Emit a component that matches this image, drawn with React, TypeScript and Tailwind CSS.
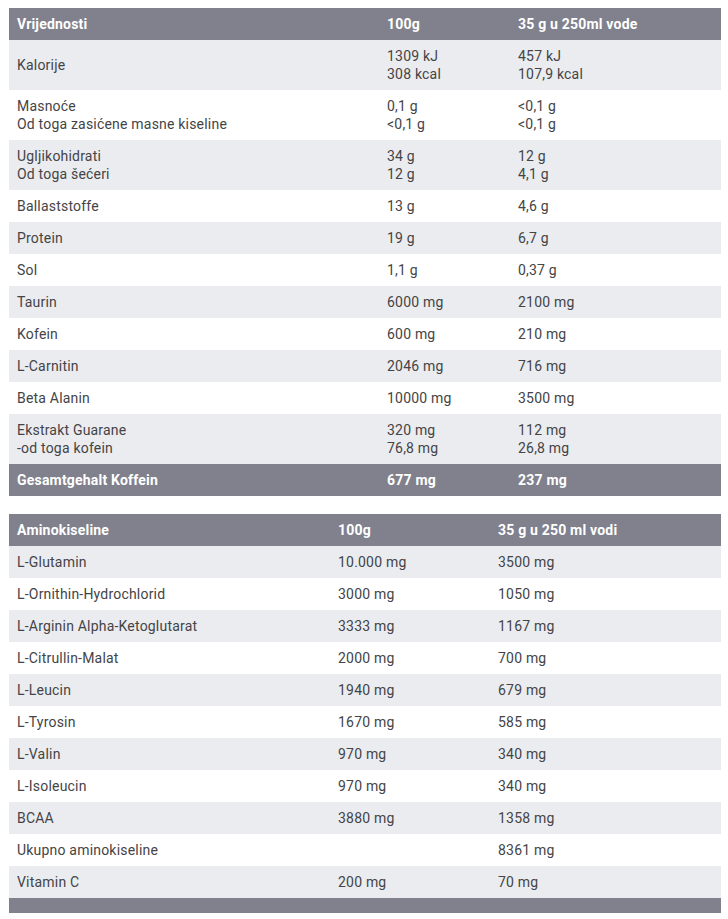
type Row = { label: string[]; a: string[]; b: string[] };

const nutrition: Row[] = [
  { label: ["Kalorije"], a: ["1309 kJ", "308 kcal"], b: ["457 kJ", "107,9 kcal"] },
  {
    label: ["Masnoće", "Od toga zasićene masne kiseline"],
    a: ["0,1 g", "<0,1 g"],
    b: ["<0,1 g", "<0,1 g"],
  },
  { label: ["Ugljikohidrati", "Od toga šećeri"], a: ["34 g", "12 g"], b: ["12 g", "4,1 g"] },
  { label: ["Ballaststoffe"], a: ["13 g"], b: ["4,6 g"] },
  { label: ["Protein"], a: ["19 g"], b: ["6,7 g"] },
  { label: ["Sol"], a: ["1,1 g"], b: ["0,37 g"] },
  { label: ["Taurin"], a: ["6000 mg"], b: ["2100 mg"] },
  { label: ["Kofein"], a: ["600 mg"], b: ["210 mg"] },
  { label: ["L-Carnitin"], a: ["2046 mg"], b: ["716 mg"] },
  { label: ["Beta Alanin"], a: ["10000 mg"], b: ["3500 mg"] },
  {
    label: ["Ekstrakt Guarane", "-od toga kofein"],
    a: ["320 mg", "76,8 mg"],
    b: ["112 mg", "26,8 mg"],
  },
];

const amino: Row[] = [
  { label: ["L-Glutamin"], a: ["10.000 mg"], b: ["3500 mg"] },
  { label: ["L-Ornithin-Hydrochlorid"], a: ["3000 mg"], b: ["1050 mg"] },
  { label: ["L-Arginin Alpha-Ketoglutarat"], a: ["3333 mg"], b: ["1167 mg"] },
  { label: ["L-Citrullin-Malat"], a: ["2000 mg"], b: ["700 mg"] },
  { label: ["L-Leucin"], a: ["1940 mg"], b: ["679 mg"] },
  { label: ["L-Tyrosin"], a: ["1670 mg"], b: ["585 mg"] },
  { label: ["L-Valin"], a: ["970 mg"], b: ["340 mg"] },
  { label: ["L-Isoleucin"], a: ["970 mg"], b: ["340 mg"] },
  { label: ["BCAA"], a: ["3880 mg"], b: ["1358 mg"] },
  { label: ["Ukupno aminokiseline"], a: [], b: ["8361 mg"] },
  { label: ["Vitamin C"], a: ["200 mg"], b: ["70 mg"] },
];

function Lines({ items }: { items: string[] }) {
  return (
    <>
      {items.map((t) => (
        <div key={t}>{t}</div>
      ))}
    </>
  );
}

function Table({
  head,
  rows,
  foot,
  widths,
}: {
  head: [string, string, string];
  rows: Row[];
  foot: [string, string, string] | null;
  widths: [string, string, string];
}) {
  const cell = "px-2 py-[7px] align-middle text-left";
  return (
    <table className="w-[712px] table-fixed border-collapse">
      <colgroup>
        <col className={widths[0]} />
        <col className={widths[1]} />
        <col className={widths[2]} />
      </colgroup>
      <thead>
        <tr className="bg-[#80818d] font-bold text-white">
          <th className={`${cell} font-bold`}>{head[0]}</th>
          <th className={`${cell} font-bold`}>{head[1]}</th>
          <th className={`${cell} font-bold`}>{head[2]}</th>
        </tr>
      </thead>
      <tbody>
        {rows.map((r, i) => (
          <tr key={r.label[0]} className={i % 2 === 0 ? "bg-[#ebecf0]" : "bg-white"}>
            <td className={cell}>
              <Lines items={r.label} />
            </td>
            <td className={cell}>
              <Lines items={r.a} />
            </td>
            <td className={cell}>
              <Lines items={r.b} />
            </td>
          </tr>
        ))}
      </tbody>
      <tfoot>
        {foot ? (
          <tr className="bg-[#80818d] font-bold text-white">
            <td className={cell}>{foot[0]}</td>
            <td className={cell}>{foot[1]}</td>
            <td className={cell}>{foot[2]}</td>
          </tr>
        ) : (
          <tr className="bg-[#80818d]">
            <td colSpan={3} className="h-[15px] p-0" />
          </tr>
        )}
      </tfoot>
    </table>
  );
}

export default function App() {
  return (
    <div className="min-h-[919px] bg-white px-[9px] pt-2 font-['Roboto',sans-serif] text-[14px] leading-[18px] tracking-[0.2px] text-[#444446]">
      <Table
        head={["Vrijednosti", "100g", "35 g u 250ml vode"]}
        rows={nutrition}
        foot={["Gesamtgehalt Koffein", "677 mg", "237 mg"]}
        widths={["w-[370px]", "w-[131px]", "w-[211px]"]}
      />
      <div className="h-[18px]" />
      <Table
        head={["Aminokiseline", "100g", "35 g u 250 ml vodi"]}
        rows={amino}
        foot={null}
        widths={["w-[321px]", "w-[160px]", "w-[231px]"]}
      />
    </div>
  );
}
